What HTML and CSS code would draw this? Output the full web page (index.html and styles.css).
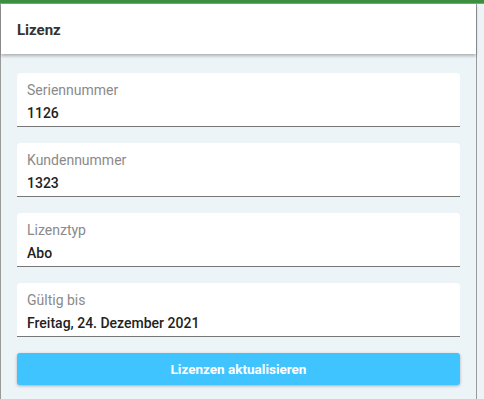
FILE: index.html
```html
<!DOCTYPE html>
<html lang="de">
<head>
<meta charset="utf-8">
<link rel="stylesheet" href="styles.css">
</head>
<body>
<div class="topbar"></div>
<div class="frame">
  <div class="panel">
    <header class="header"><h1 class="title">Lizenz</h1></header>
    <main class="content">
      <div class="field">
        <div class="label">Seriennummer</div>
        <div class="value">1126</div>
      </div>
      <div class="field">
        <div class="label">Kundennummer</div>
        <div class="value">1323</div>
      </div>
      <div class="field">
        <div class="label">Lizenztyp</div>
        <div class="value">Abo</div>
      </div>
      <div class="field">
        <div class="label">Gültig bis</div>
        <div class="value">Freitag, 24. Dezember 2021</div>
      </div>
      <button class="btn">Lizenzen aktualisieren</button>
    </main>
  </div>
  <div class="side"></div>
</div>
</body>
</html>
```
FILE: styles.css
```css
html, body {
  margin: 0;
  padding: 0;
  height: 100%;
  background: #edf4f8;
  font-family: Roboto, "Liberation Sans", sans-serif;
  overflow: hidden;
}
.topbar {
  height: 3px;
  background: #3c8f3e;
  border-bottom: 1px solid #8a9a8a;
}
.frame {
  display: flex;
  height: calc(100% - 4px);
}
.panel {
  width: 475px;
  border-left: 1px solid #9a9a9a;
  border-right: 1px solid #9a9a9a;
  background: #edf4f8;
  display: flex;
  flex-direction: column;
}
.side {
  flex: 1;
  background: #edf4f8;
}
.header {
  height: 50px;
  box-sizing: border-box;
  padding-top: 2px;
  background: #fff;
  box-shadow: 0 2px 3px rgba(0,0,0,0.28);
  display: flex;
  align-items: center;
  padding-left: 16px;
  position: relative;
  z-index: 1;
}
.title {
  margin: 0;
  font-size: 15px;
  font-weight: 700;
  color: #333;
}
.content {
  padding: 19px 16px 0 16px;
  display: flex;
  flex-direction: column;
  gap: 16px;
}
.field {
  background: #fff;
  border-radius: 4px 4px 0 0;
  border-bottom: 1px solid #777;
  padding: 9px 10px 0 10px;
  height: 44px;
}
.label {
  font-size: 14px;
  line-height: 17px;
  color: #8a8a8a;
}
.value {
  margin-top: 6px;
  font-size: 14px;
  line-height: 17px;
  font-weight: 500;
  color: #222;
}
.btn {
  height: 32px;
  border: none;
  border-radius: 3px;
  background: #40c4ff;
  color: #fff;
  font-family: inherit;
  font-size: 13.5px;
  font-weight: 700;
  box-shadow: 0 1px 3px rgba(0,0,0,0.3);
  padding: 0;
}
```
